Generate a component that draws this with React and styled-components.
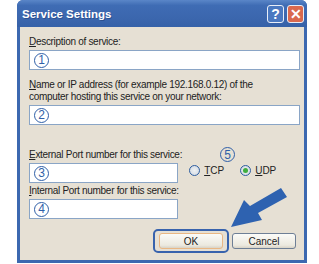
import React from 'react'
import styled, { createGlobalStyle } from 'styled-components'

const Global = createGlobalStyle`
  html, body { margin: 0; padding: 0; background: #fff; }
  body { font-family: "Liberation Sans", Arial, sans-serif; }
`

const Page = styled.div`
  width: 319px;
  height: 264px;
  padding-left: 17px;
  box-sizing: border-box;
`

const Window = styled.div`
  position: relative;
  width: 290px;
  height: 263px;
  display: flex;
  flex-direction: column;
  background: #3c68b0;
  border-radius: 6px 6px 0 0;
  padding: 0 3px 3px 3px;
  box-sizing: border-box;
`

const TitleBar = styled.div`
  height: 27px;
  display: flex;
  align-items: center;
  background: linear-gradient(#5a86c8 0%, #3f6cb4 20%, #3b66ad 70%, #3561a8 100%);
  margin: 0 -3px;
  padding-left: 5px;
  padding-right: 3px;
  border-radius: 6px 6px 0 0;
`

const Title = styled.div`
  flex: 1;
  color: #fff;
  font-weight: bold;
  font-size: 11.5px;
  text-shadow: 1px 1px 0 rgba(20, 40, 90, 0.35);
`

const CapButton = styled.div`
  width: 17px;
  height: 18px;
  border: 1px solid #e8eef8;
  border-radius: 3px;
  margin-left: 3px;
  box-sizing: border-box;
  display: flex;
  align-items: center;
  justify-content: center;
  color: #fff;
  font-weight: bold;
  font-size: 14px;
  background: ${p => (p.$close ? '#d9694f' : '#4a78c0')};
`

const Body = styled.div`
  flex: 1;
  background: #e6e0d4;
  padding: 9px 6px 0 9px;
  display: flex;
  flex-direction: column;
  font-size: 10px;
  color: #222;
`

const Label = styled.div`
  line-height: 12px;
  height: ${p => (p.$lines || 1) * 12}px;
  margin-top: ${p => p.$mt || 0}px;
  margin-bottom: 2px;
  white-space: nowrap;
  letter-spacing: -0.3px;
`

const Field = styled.div`
  width: ${p => p.$w || 271}px;
  height: 20px;
  box-sizing: border-box;
  border: 1px solid #8aa5c6;
  background: #fff;
  display: flex;
  align-items: center;
  padding-left: 4px;
`

const Num = styled.span`
  width: 15px;
  height: 15px;
  box-sizing: border-box;
  border: 1.3px solid #2f5fa8;
  border-radius: 50%;
  display: inline-flex;
  align-items: center;
  justify-content: center;
  font-family: "Liberation Sans", Arial, sans-serif;
  font-size: 12px;
  line-height: 1;
  color: #2f5fa8;
`

const PortRow = styled.div`
  display: flex;
  align-items: flex-start;
`

const PortCol = styled.div`
  flex: 0 0 149px;
  display: flex;
  flex-direction: column;
`

const RadioCol = styled.div`
  display: flex;
  flex-direction: column;
  margin-left: 7px;
  margin-top: 22px;
`

const FiveRow = styled.div`
  height: 17px;
  padding-left: 31px;
`

const RadioRow = styled.div`
  display: flex;
  align-items: center;
  margin-top: 1px;
`

const Radio = styled.div`
  display: flex;
  align-items: center;
  margin-right: 16px;
`

const Dot = styled.div`
  width: 11px;
  height: 11px;
  border-radius: 50%;
  border: 1px solid #2d5da0;
  box-sizing: border-box;
  background: radial-gradient(circle, #eef1f4 0%, #cfd6de 100%);
  display: flex;
  align-items: center;
  justify-content: center;
  margin-right: 4px;
  &::after {
    content: '';
    display: ${p => (p.$on ? 'block' : 'none')};
    width: 5px;
    height: 5px;
    border-radius: 50%;
    background: #3fae3f;
  }
`

const Buttons = styled.div`
  display: flex;
  justify-content: flex-end;
  margin-top: 10px;
  gap: 3px;
  padding-right: 2px;
`

const Focus = styled.div`
  border: 2px solid #3863ad;
  border-radius: 5px;
  padding: 2px 4px;
`

const Button = styled.div`
  width: 64px;
  height: 16px;
  box-sizing: border-box;
  border: 1px solid ${p => (p.$focus ? '#e9b784' : '#6e7f96')};
  border-radius: 3px;
  background: linear-gradient(#fbfbf8, #ece9df 80%, #d8d3c6);
  display: flex;
  align-items: center;
  justify-content: center;
  font-size: 10px;
  color: #222;
  margin-top: ${p => (p.$focus ? 0 : 4)}px;
`

const Arrow = styled.svg`
  position: absolute;
  left: 206px;
  top: 187px;
`

export default function App() {
  return (
    <Page>
      <Global />
      <Window>
        <TitleBar>
          <Title>Service Settings</Title>
          <CapButton>?</CapButton>
          <CapButton $close>✕</CapButton>
        </TitleBar>
        <Body>
          <Label><u>D</u>escription of service:</Label>
          <Field><Num>1</Num></Field>
          <Label $mt={9} $lines={2}>
            <u>N</u>ame or IP address (for example 192.168.0.12) of the<br />
            computer hosting this service on your network:
          </Label>
          <Field><Num>2</Num></Field>
          <PortRow>
            <PortCol>
              <Label $mt={24}><u>E</u>xternal Port number for this service:</Label>
              <Field $w={149}><Num>3</Num></Field>
              <Label $mt={2}><u>I</u>nternal Port number for this service:</Label>
              <Field $w={149}><Num>4</Num></Field>
            </PortCol>
            <RadioCol>
              <FiveRow><Num>5</Num></FiveRow>
              <RadioRow>
                <Radio><Dot /><span><u>T</u>CP</span></Radio>
                <Radio><Dot $on /><span><u>U</u>DP</span></Radio>
              </RadioRow>
            </RadioCol>
          </PortRow>
          <Buttons>
            <Focus><Button $focus>OK</Button></Focus>
            <Button>Cancel</Button>
          </Buttons>
        </Body>
        <Arrow width="64" height="42" viewBox="0 0 64 42">
          <polygon points="58,1 64,10 35,26 39,33 8,40 21,13 27,19" fill="#2e62b0" />
        </Arrow>
      </Window>
    </Page>
  )
}
